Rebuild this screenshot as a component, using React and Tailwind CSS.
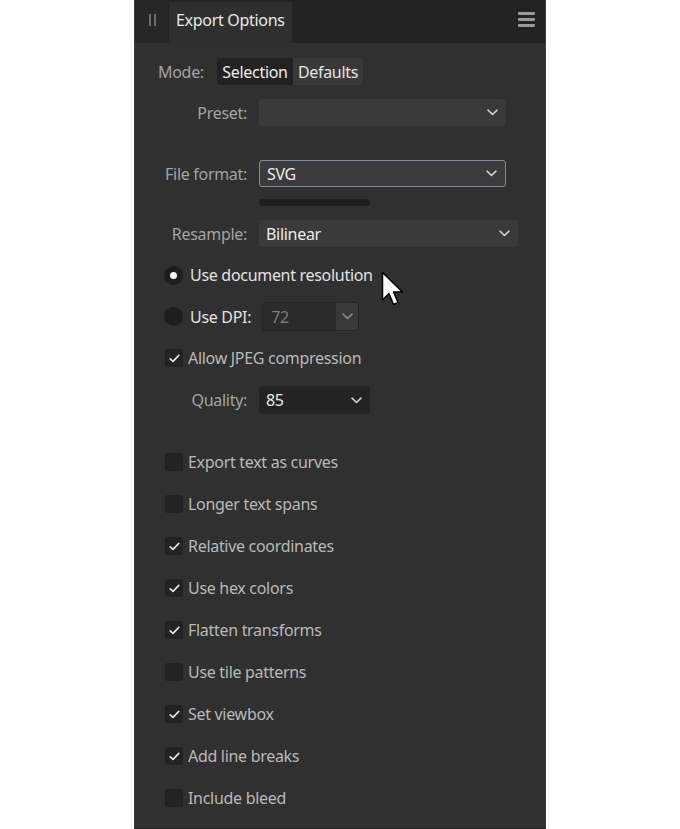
import React from "react";

const Chevron = ({ className = "" }) => (
  <svg width="11" height="7" viewBox="0 0 11 7" className={className}>
    <path d="M1 1.2 L5.5 5.5 L10 1.2" fill="none" stroke="currentColor" strokeWidth="1.6" strokeLinecap="round" strokeLinejoin="round" />
  </svg>
);

const Check = () => (
  <svg width="11" height="9" viewBox="0 0 11 9">
    <path d="M1.2 4.8 L4 7.4 L9.8 1.4" fill="none" stroke="#e8e8e8" strokeWidth="1.6" strokeLinecap="round" strokeLinejoin="round" />
  </svg>
);

const CheckRow = ({ checked, label, className = "" }) => (
  <div className={"flex items-center h-[24px] pl-[30px] " + className}>
    <div className="w-[18px] h-[18px] rounded-[3px] bg-[#232323] flex items-center justify-center">
      {checked && <Check />}
    </div>
    <span className="ml-[5px] text-[#b9b9b9]">{label}</span>
  </div>
);

const Select = ({ value, width, className = "", bg = "bg-[#3a3a3a]", chevronPad = "pr-[8px]" }) => (
  <div className={`flex items-center justify-between h-[27px] rounded-[3px] ${bg} pl-[7px] ${chevronPad} ${width} ${className}`}>
    <span className="text-[#ececec]">{value}</span>
    <Chevron className="text-[#d0d0d0]" />
  </div>
);

export default function App() {
  const checks = [
    ["Export text as curves", false],
    ["Longer text spans", false],
    ["Relative coordinates", true],
    ["Use hex colors", true],
    ["Flatten transforms", true],
    ["Use tile patterns", false],
    ["Set viewbox", true],
    ["Add line breaks", true],
    ["Include bleed", false],
  ];
  return (
    <div className="w-[680px] h-[829px] bg-white flex justify-center" style={{ fontFamily: '"Noto Sans", "Open Sans", sans-serif' }}>
      <div className="relative w-[412px] h-[829px] bg-[#303030] border-x border-[#3c3c3c] border-b border-b-[#1e1e1e] flex flex-col text-[16px] leading-none">
        {/* Header */}
        <div className="flex h-[43px] bg-[#232323] shrink-0">
          <div className="w-[34px] bg-[#262626] flex items-center justify-center gap-[3px] pb-[4px]">
            <div className="w-[2px] h-[12px] bg-[#6c6c6c]" />
            <div className="w-[2px] h-[12px] bg-[#6c6c6c]" />
          </div>
          <div className="w-[123px] mt-[2px] bg-[#2f2f2f] flex items-center pl-[7px] pb-[5px] text-[#e8e8e8] tracking-[-0.3px]">
            Export Options
          </div>
          <div className="flex-1" />
          <div className="flex flex-col gap-[3px] justify-center mr-[10px] pb-[4px]">
            <div className="w-[17px] h-[3px] rounded-[1px] bg-[#9a9a9a]" />
            <div className="w-[17px] h-[3px] rounded-[1px] bg-[#9a9a9a]" />
            <div className="w-[17px] h-[3px] rounded-[1px] bg-[#9a9a9a]" />
          </div>
        </div>

        <div className="flex flex-col tracking-[-0.3px]">
          {/* Mode */}
          <div className="flex items-center mt-[15px] h-[27px] pl-[23px]">
            <span className="text-[#a3a3a3] w-[59px]">Mode:</span>
            <div className="flex h-[27px] rounded-[3px] overflow-hidden">
              <div className="bg-[#222222] w-[76px] justify-center flex items-center text-[#ececec]">Selection</div>
              <div className="bg-[#393939] w-[70px] justify-center flex items-center text-[#e4e4e4]">Defaults</div>
            </div>
          </div>

          {/* Preset */}
          <div className="flex items-center mt-[14px] h-[27px]">
            <span className="w-[112px] text-right text-[#a3a3a3]">Preset:</span>
            <Select value="" width="w-[247px]" className="ml-[12px]" />
          </div>

          {/* File format */}
          <div className="flex items-center mt-[34px] h-[27px]">
            <span className="w-[112px] text-right text-[#a3a3a3]">File format:</span>
            <Select value="SVG" width="w-[247px]" className="ml-[12px] border border-[#7d8aa6]" bg="bg-[#3b3b3d]" />
          </div>
          <div className="ml-[124px] mt-[12px] w-[111px] h-[7px] rounded-[3px] bg-[#1f1f1f]" />

          {/* Resample */}
          <div className="flex items-center mt-[14px] h-[27px]">
            <span className="w-[112px] text-right text-[#a3a3a3]">Resample:</span>
            <Select value="Bilinear" width="w-[259px]" className="ml-[12px]" />
          </div>

          {/* Radios */}
          <div className="flex items-center mt-[16px] h-[24px] pl-[29px]">
            <div className="w-[19px] h-[19px] rounded-full bg-[#1e1e1e] flex items-center justify-center">
              <div className="w-[7px] h-[7px] rounded-full bg-[#f2f2f2]" />
            </div>
            <span className="ml-[7px] text-[#e2e2e2]">Use document resolution</span>
          </div>
          <div className="flex items-center mt-[15px] h-[29px] pl-[29px]">
            <div className="w-[19px] h-[19px] rounded-full bg-[#1e1e1e]" />
            <span className="ml-[7px] text-[#e2e2e2]">Use DPI:</span>
            <div className="ml-[11px] flex h-[29px] w-[97px] rounded-[3px] border border-[#262626] bg-[#2b2b2b] overflow-hidden">
              <span className="flex-1 flex items-center pl-[8px] text-[#7c7c7c]">72</span>
              <div className="w-[22px] bg-[#393939] flex items-center justify-center">
                <Chevron className="text-[#8a8a8a]" />
              </div>
            </div>
          </div>

          <CheckRow checked label="Allow JPEG compression" className="mt-[15px]" />

          {/* Quality */}
          <div className="flex items-center mt-[16px] h-[28px]">
            <span className="w-[112px] text-right text-[#a3a3a3]">Quality:</span>
            <Select value="85" width="w-[111px]" className="ml-[12px] h-[28px]" bg="bg-[#232323]" />
          </div>

          <div className="flex flex-col gap-[18px] mt-[36px]">
            {checks.map(([l, c]) => (
              <CheckRow key={l} checked={c} label={l} />
            ))}
          </div>
        </div>

        {/* Mouse cursor */}
        <svg className="absolute left-[246px] top-[271px]" width="24" height="40" viewBox="0 0 24 40">
          <path d="M1.5 1.5 L1.5 29 L8 22.5 L12.5 33.5 L17 31.5 L12.5 21 L21.5 21 Z" fill="#ffffff" stroke="#000000" strokeWidth="1.5" strokeLinejoin="round" />
        </svg>
      </div>
    </div>
  );
}
